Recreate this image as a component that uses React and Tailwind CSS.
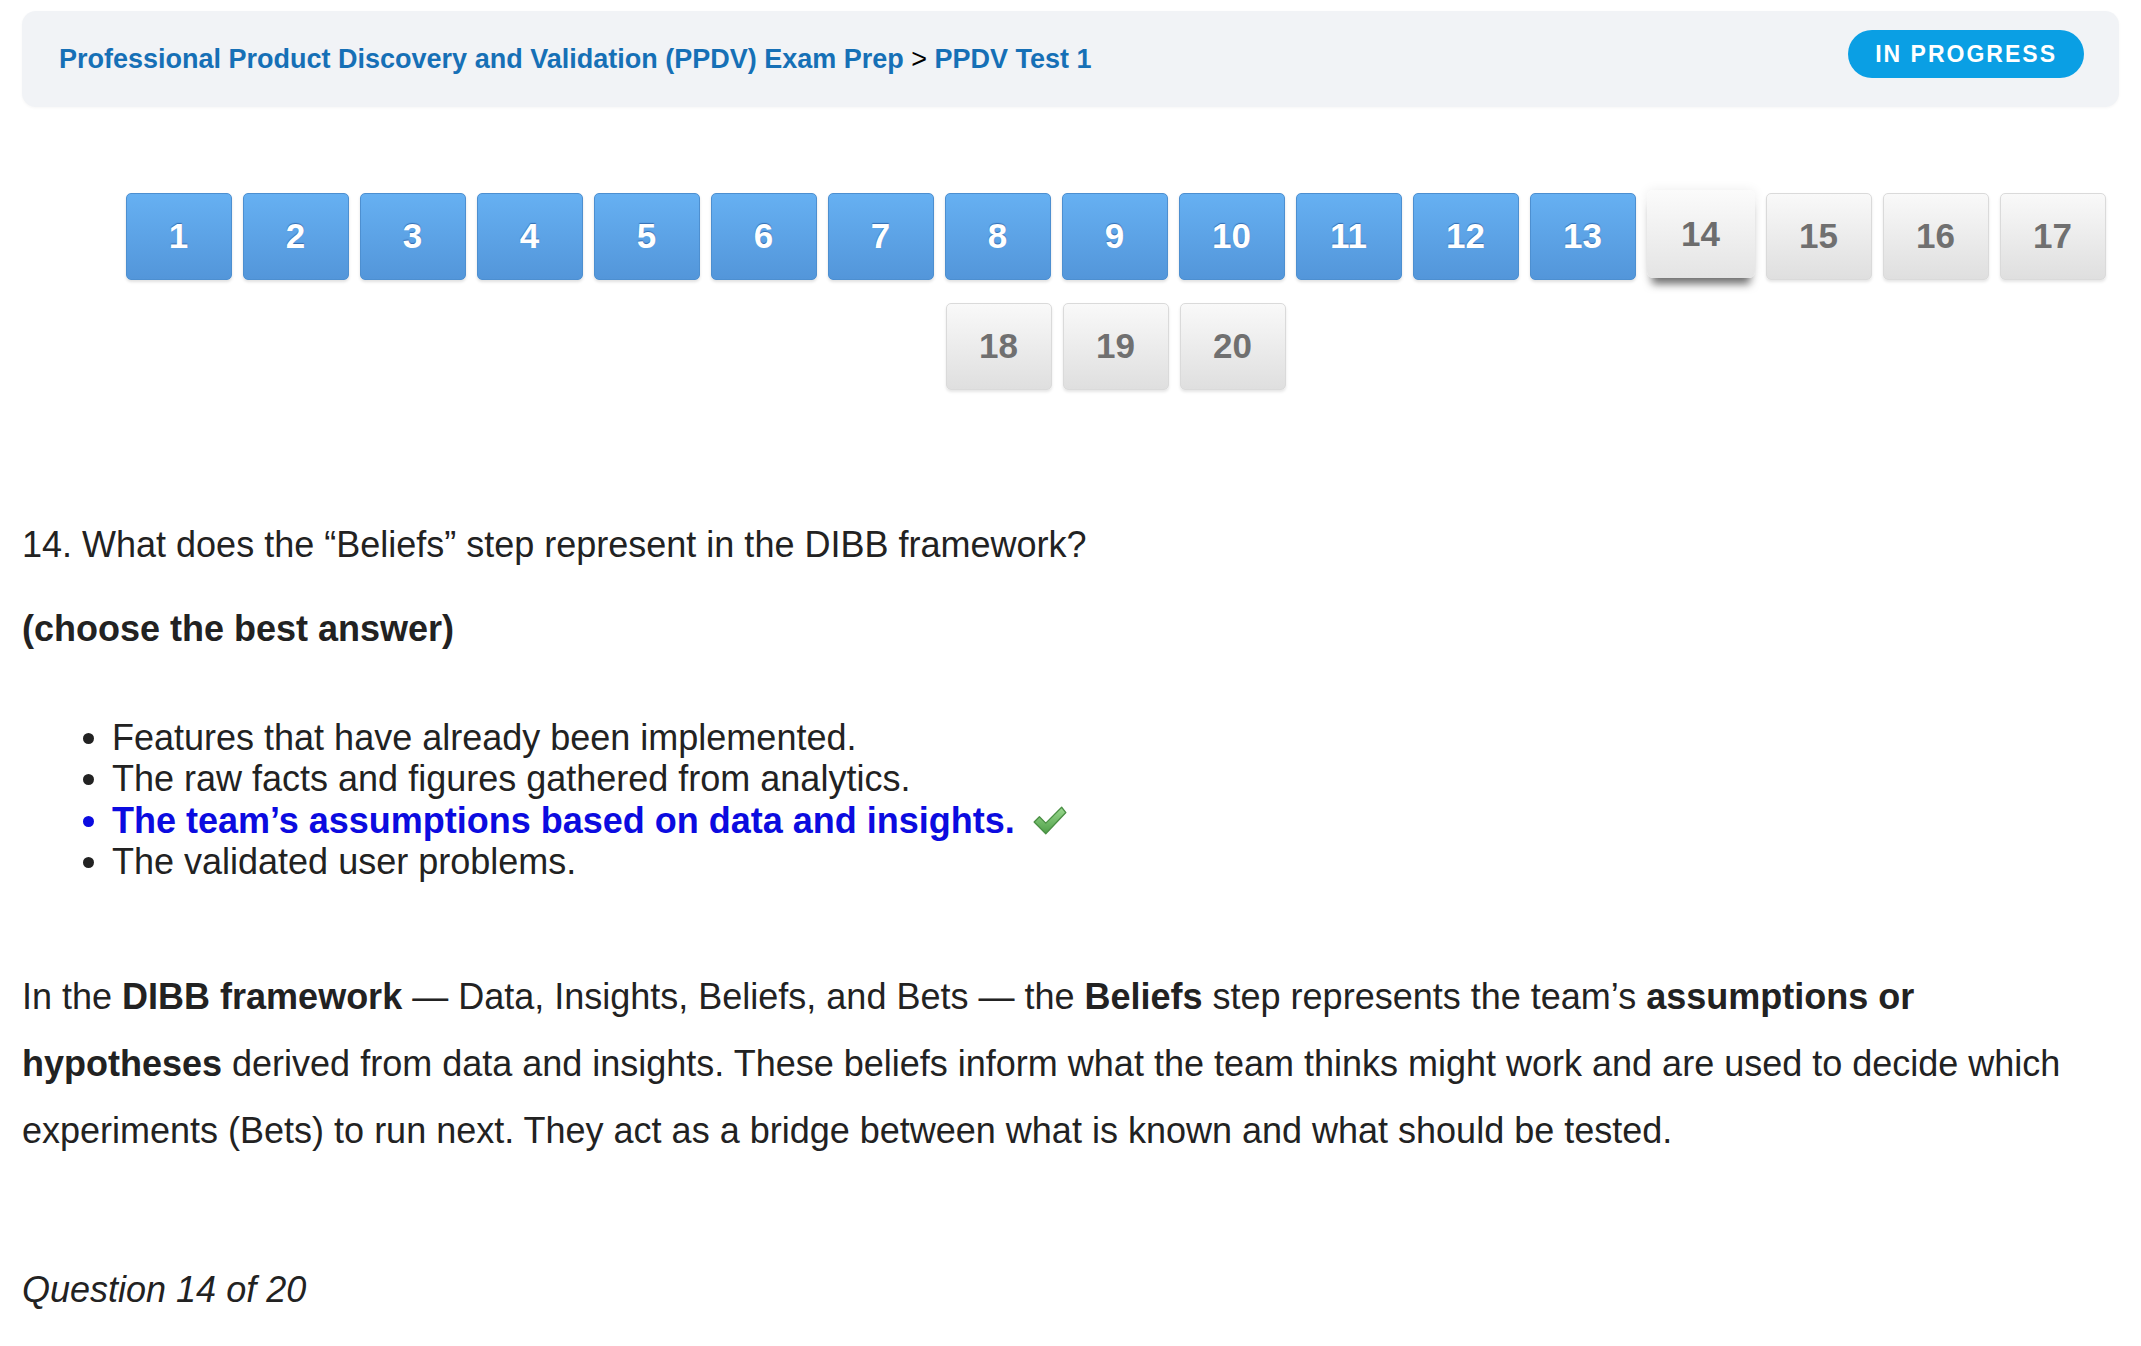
import React from 'react';

const font = { fontFamily: '"Liberation Sans", Arial, Helvetica, sans-serif' };

const answers = [
  { text: 'Features that have already been implemented.' },
  { text: 'The raw facts and figures gathered from analytics.' },
  { text: 'The team’s assumptions based on data and insights.', correct: true },
  { text: 'The validated user problems.' },
];

const CheckMark = () => (
  <svg width="36" height="32" viewBox="0 0 34 30" className="inline-block ml-[17px] -mt-[4px] align-middle">
    <defs>
      <linearGradient id="chk" x1="0" y1="0" x2="0" y2="1">
        <stop offset="0%" stopColor="#9bd98f" />
        <stop offset="100%" stopColor="#4e9f48" />
      </linearGradient>
    </defs>
    <path
      d="M2 16 L7 11 L13 17 L28 2 L32 7 L13 27 Z"
      fill="url(#chk)"
      stroke="#4a8f44"
      strokeWidth="1.2"
      strokeLinejoin="round"
    />
  </svg>
);

const QuestionButton = ({ n, done, current }) => {
  if (current) {
    return (
      <div className="w-[108px] h-[88px] -mt-[3px] rounded-[6px] bg-gradient-to-b from-[#fbfbfb] to-[#e4e4e4] shadow-[0_11px_9px_-5px_rgba(0,0,0,0.55),0_0_12px_rgba(0,0,0,0.08)] flex items-center justify-center text-[35px] font-bold text-[#6d6d6d]">
        {n}
      </div>
    );
  }
  if (done) {
    return (
      <div className="w-[106px] h-[87px] rounded-[5px] border border-[#4d8fd0] bg-gradient-to-b from-[#66b0f2] to-[#5396da] shadow-[0_2px_3px_rgba(0,0,0,0.12)] flex items-center justify-center text-[35px] font-bold text-white [text-shadow:0_-1px_1px_rgba(0,40,110,0.45)]">
        {n}
      </div>
    );
  }
  return (
    <div className="w-[106px] h-[87px] rounded-[5px] border border-[#dadada] bg-gradient-to-b from-[#f9f9f9] to-[#dfdfdf] shadow-[0_2px_3px_rgba(0,0,0,0.1)] flex items-center justify-center text-[35px] font-bold text-[#707070]">
      {n}
    </div>
  );
};

export default function App() {
  const current = 14;
  const total = 20;

  return (
    <div className="min-h-screen bg-white px-[22px] pt-[11px] text-[#222]" style={font}>
      {/* Breadcrumb header */}
      <div className="h-[96px] rounded-[14px] bg-[#f1f3f6] shadow-[0_1px_3px_rgba(0,0,0,0.04)] flex items-center justify-between pl-[37px] pr-[35px]">
        <div className="text-[27px] font-bold text-[#1670b6]">
          Professional Product Discovery and Validation (PPDV) Exam Prep
          <span className="font-normal text-black"> &gt; </span>
          PPDV Test 1
        </div>
        <div className="h-[48px] mb-[10px] px-[27px] rounded-full bg-[#0a9fe4] flex items-center text-[23px] font-bold tracking-[2px] text-white">
          IN PROGRESS
        </div>
      </div>

      {/* Question navigation */}
      <div className="mt-[86px] pl-[90px] flex flex-wrap justify-center gap-x-[11px] gap-y-[23px]">
        {Array.from({ length: total }, (_, i) => i + 1).map((n) => (
          <QuestionButton key={n} n={n} done={n < current} current={n === current} />
        ))}
      </div>

      {/* Question */}
      <p className="mt-[134px] text-[36px] leading-[41px]">
        14. What does the “Beliefs” step represent in the DIBB framework?
      </p>
      <p className="mt-[43px] text-[36px] leading-[41px] font-bold">(choose the best answer)</p>

      <ul className="mt-[68px] pl-[90px] list-disc text-[36px] leading-[41.4px]">
        {answers.map((a) => (
          <li key={a.text} className={a.correct ? 'font-bold text-[#0b0be0]' : ''}>
            {a.text}
            {a.correct && <CheckMark />}
          </li>
        ))}
      </ul>

      {/* Explanation */}
      <p className="mt-[80px] text-[36px] leading-[67px]">
        In the <b>DIBB framework</b> — Data, Insights, Beliefs, and Bets — the <b>Beliefs</b> step represents the
        team’s <b>assumptions or hypotheses</b> derived from data and insights. These beliefs inform what the team
        thinks might work and are used to decide which experiments (Bets) to run next. They act as a bridge between
        what is known and what should be tested.
      </p>

      <p className="mt-[105px] text-[36px] leading-[41px] italic">Question 14 of 20</p>
    </div>
  );
}
